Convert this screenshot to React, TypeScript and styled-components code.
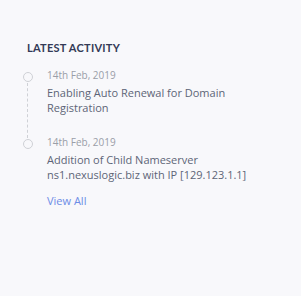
import React from "react";
import styled, { createGlobalStyle } from "styled-components";

const GlobalStyle = createGlobalStyle`
  html, body {
    margin: 0;
    padding: 0;
    background: #f8f8fb;
  }
`;

const activities = [
  {
    date: "14th Feb, 2019",
    lines: ["Enabling Auto Renewal for Domain", "Registration"],
  },
  {
    date: "14th Feb, 2019",
    lines: ["Addition of Child Nameserver", "ns1.nexuslogic.biz with IP [129.123.1.1]"],
  },
];

const Panel = styled.div`
  width: 301px;
  height: 296px;
  box-sizing: border-box;
  padding: 42px 20px 0 27px;
  background: #f8f8fb;
  font-family: "Open Sans", sans-serif;
`;

const Heading = styled.h3`
  margin: 0 0 14px;
  font-family: Lato, "Open Sans", sans-serif;
  font-weight: 700;
  font-size: 11px;
  letter-spacing: 0.25px;
  color: #333a56;
  line-height: 12px;
`;

const List = styled.ul`
  list-style: none;
  margin: 0;
  padding: 0;
`;

const Item = styled.li<{ $last?: boolean }>`
  position: relative;
  padding: 0 0 ${(p) => (p.$last ? "6px" : "20px")} 20px;

  &::before {
    content: "";
    position: absolute;
    left: -4px;
    top: 4px;
    width: 8px;
    height: 8px;
    border: 1px solid #cfd1d6;
    border-radius: 50%;
    background: #f8f8fb;
  }

  &::after {
    content: "";
    display: ${(p) => (p.$last ? "none" : "block")};
    position: absolute;
    left: 0;
    top: 15px;
    bottom: -3px;
    border-left: 1px dashed #cfd1d6;
  }
`;

const Date = styled.div`
  font-size: 10px;
  line-height: 14px;
  color: #9a9ea8;
  margin-bottom: 3px;
`;

const Text = styled.div`
  font-size: 11px;
  line-height: 15px;
  color: #5d6577;
`;

const ViewAll = styled.a`
  display: inline-block;
  margin-left: 20px;
  font-size: 11px;
  line-height: 15px;
  color: #6c8ce6;
  text-decoration: none;
  cursor: pointer;
`;

export default function App() {
  return (
    <>
      <GlobalStyle />
      <Panel>
        <Heading>LATEST ACTIVITY</Heading>
        <List>
          {activities.map((a, i) => (
            <Item key={i} $last={i === activities.length - 1}>
              <Date>{a.date}</Date>
              <Text>
                {a.lines.map((l, j) => (
                  <div key={j}>{l}</div>
                ))}
              </Text>
            </Item>
          ))}
        </List>
        <ViewAll>View All</ViewAll>
      </Panel>
    </>
  );
}
